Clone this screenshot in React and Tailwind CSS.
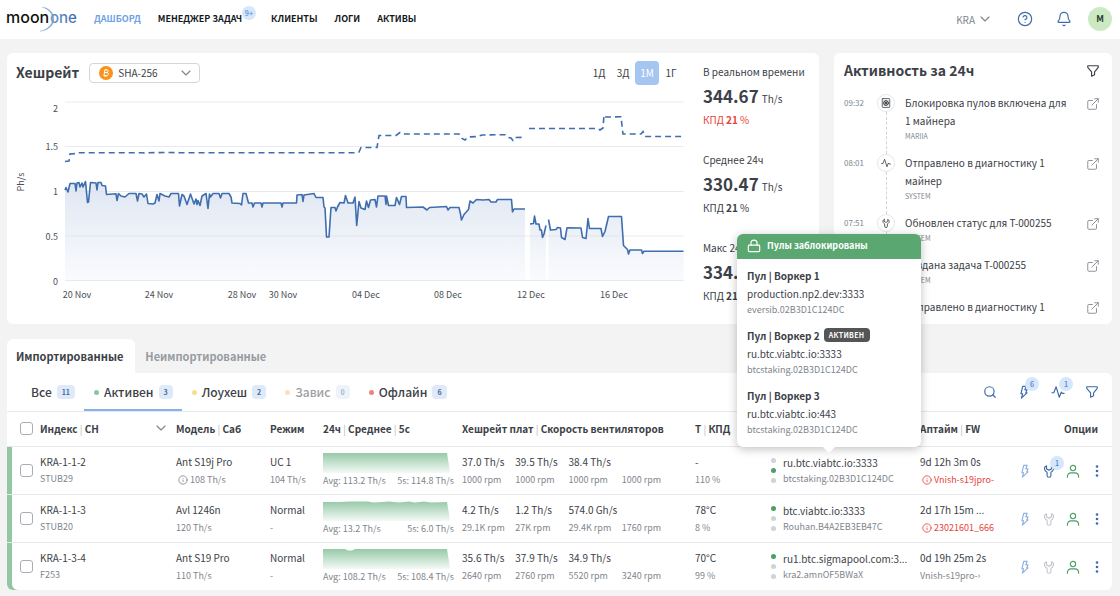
import { useState } from 'react';
import { Bell, ChevronDown, CircleHelp, ExternalLink, Info, Search } from 'lucide-react';

const MAX_LINE =
  'M65 161.5 69 161 70 154 76 153.5 78 152.7H143L145 153.4 148 152.7 170 152.5 180 152.7H356L359 152 361 147.5H377L379 135.5H396L400 132.5 402 134H459L462 138.5 465 140 468 137 478 136.5 482 135 505 134.7 508 137.5 511 138 513 140.5 515 137.5 525 137.3M529 128.5H598L600 130 603 128 604 115 606 117 621 116.8 623 134H641L643 131.5 645 136.5H683.5';

// the series has two short gaps, so every segment is drawn and filled on its own
const SEGMENTS = [
  {
    from: 65,
    d: '65 190 66 187.5 68 192 70 183.5 75 183.5 76 191 77 183 79 182.5 80 187 82 183 83 187 85.5 181.5 87.5 202.5 88.5 202 90.5 182.5 96 183 97 190 98 182.5 101 182.5 102 185.5 105.5 186 106.5 194.5 116 193.8 117 200.5 118.5 193.5 121 196 125 197 129 193.5 136 193.5 137.5 201 139 193.5 142 194 144 197 146.5 194 148 203.5 153 204 155 203 157 194.5 159 201 160 193.5 165 196 169 197 171 193.5 178.5 193.5 179.5 206 182 194.5 184 196 187 204.5 190.5 194 194 204 196 199 197 204.5 198 200.5 200 205.5 202 196 206 193.5 208 208.5 209.5 194 210.5 197 213 193.5 219 193.5 220.5 198 222 193.5 229 193.5 231 197 232 203 240 203.5 241.5 205 243 193.5 246 193.5 248.5 203 252 203 253 207 254.5 203 261 203 262 207 263 203 281 203 282 207 283 203 296.5 203 297 195 302 194.5 303 201.5 304 195 314 193.5 316 197.5 323 197.5 324 207 325 208 326.5 237 329 237 331 207.5 335 207.5 336 211 337.5 207 340 202.5 344 203 345.5 195.5 348 203 353 203 355 197 356.7 225.5 359 201.5 361 208 365 209.5 366.5 201 368.5 207.5 370.5 200 375 199.5 376.5 207 378 196 385 196 386 204.5 386.5 196 388.5 205.5 395 205.5 396.5 197.5 399.5 204.5 401.5 196.5 406 196.5 406.5 207.5 423 207 427 210 429.5 207.5 446.5 206.5 448 210 450 207.5 459 207.5 460.5 214 461.5 220 464 214.5 468.5 209.5 470 201 473 203 476.5 199.5 483 200 489 199.5 491 202 496 202 497.5 199.5 511.5 199.5 512.5 212 514 209 525 209',
  },
  {
    from: 530,
    d: '530 224 533.5 223.5 534.5 216 536 224 539 224 540 230 541.5 230 542.5 237.5 544 234 546 225.5',
  },
  {
    from: 548.5,
    d: '548.5 219.5 550.5 230 556 229.5 557.5 227.5 560.5 228 561.5 237.5 565 239.5 567 227.8 581 228 582.5 237.5 586 238.5 588 218.5 589.5 228.5 601 228.5 602.5 236.5 605 231.5 608.5 216.5 621.5 216.5 623.5 245.5 627.5 249.5 628.5 254 630 250 641.5 250 642.5 253.5 644 251.3 683.5 251.3',
  },
];

const Y_TICKS = [
  { label: '2', line: 102, y: 112 },
  { label: '1.5', line: 146.5, y: 150 },
  { label: '1', line: 191.5, y: 195 },
  { label: '0.5', line: 236, y: 240 },
  { label: '0', line: 280.5, y: 285 },
];

const X_TICKS = [
  { label: '20 Nov', x: 77 },
  { label: '24 Nov', x: 159 },
  { label: '28 Nov', x: 242 },
  { label: '30 Nov', x: 283 },
  { label: '04 Dec', x: 366 },
  { label: '08 Dec', x: 448 },
  { label: '12 Dec', x: 531 },
  { label: '16 Dec', x: 614 },
];

const STATS = [
  { title: 'В реальном времени', value: '344.67', percent: 21, alert: true },
  { title: 'Среднее 24ч', value: '330.47', percent: 21 },
  { title: 'Макс 24ч', value: '334.67', percent: 21 },
];

const EVENTS = [
  { time: '09:32', icon: 'pool', text: 'Блокировка пулов включена для 1 майнера', author: 'MARIIA' },
  { time: '08:01', icon: 'pulse', text: 'Отправлено в диагностику 1 майнер', author: 'SYSTEM' },
  { time: '07:51', icon: 'wrench', text: 'Обновлен статус для T-000255', author: 'SYSTEM' },
  { time: '', icon: 'wrench', text: 'Создана задача T-000255', author: 'SYSTEM' },
  { time: '', icon: 'pulse', text: 'Отправлено в диагностику 1', author: '' },
];

const FILTERS = [
  { id: 'all', label: 'Все', count: 11 },
  { id: 'active', label: 'Активен', count: 3, dot: 'bg-[#8cc5a0]' },
  { id: 'low', label: 'Лоухеш', count: 2, dot: 'bg-[#f7e08a]' },
  { id: 'stuck', label: 'Завис', count: 0, dot: 'bg-[#fbc27a]' },
  { id: 'offline', label: 'Офлайн', count: 6, dot: 'bg-[#f08080]' },
];

const POOLS = [
  { id: 1, url: 'production.np2.dev:3333', worker: 'eversib.02B3D1C124DC' },
  { id: 2, url: 'ru.btc.viabtc.io:3333', worker: 'btcstaking.02B3D1C124DC', active: true },
  { id: 3, url: 'ru.btc.viabtc.io:443', worker: 'btcstaking.02B3D1C124DC' },
];

const MINERS = [
  {
    name: 'KRA-1-1-2', sn: 'STUB29', model: 'Ant S19j Pro', sub: '108 Th/s', subInfo: true, mode: 'UC 1', modeSub: '104 Th/s',
    spark: 'M0 0H124L127 19V20H0Z', avg: '113.2 Th/s', last: '114.8 Th/s',
    boards: ['37.0 Th/s', '39.5 Th/s', '38.4 Th/s', ''], fans: ['1000 rpm', '1000 rpm', '1000 rpm', '1000 rpm'],
    temp: '-', eff: '110 %', pool: 'ru.btc.viabtc.io:3333', worker: 'btcstaking.02B3D1C124DC', poolIndex: 1,
    uptime: '9d 12h 3m 0s', fw: 'Vnish-s19jpro-', fwAlert: true, tasks: 1, tooltip: true,
  },
  {
    name: 'KRA-1-1-3', sn: 'STUB20', model: 'Avl 1246n', sub: '120 Th/s', mode: 'Normal', modeSub: '-',
    spark: 'M0 1H16L28 .5 45 .5 50 1.5 60 1 66 .5 76 1.5 86 .5 92 1.5 101 .5 108 1.5 124 1 127 19V20H0Z', avg: '13.2 Th/s', last: '6.0 Th/s',
    boards: ['4.2 Th/s', '1.2 Th/s', '574.0 Gh/s', ''], fans: ['29.1K rpm', '27K rpm', '29.4K rpm', '1760 rpm'],
    temp: '78°C', eff: '8 %', pool: 'btc.viabtc.io:3333', worker: 'Rouhan.B4A2EB3EB47C', poolIndex: 0,
    uptime: '2d 17h 15m ...', fw: '23021601_666', fwAlert: true,
  },
  {
    name: 'KRA-1-3-4', sn: 'F253', model: 'Ant S19 Pro', sub: '110 Th/s', mode: 'Normal', modeSub: '-',
    spark: 'M0 0H22L25 1.5 29 1.5 32 0H124L127 19V20H0Z', avg: '108.2 Th/s', last: '108.4 Th/s',
    boards: ['35.6 Th/s', '37.9 Th/s', '34.9 Th/s', ''], fans: ['2640 rpm', '2760 rpm', '5520 rpm', '3240 rpm'],
    temp: '70°C', eff: '99 %', pool: 'ru1.btc.sigmapool.com:3...', worker: 'kra2.amnOF5BWaX', poolIndex: 0,
    uptime: '0d 19h 25m 2s', fw: 'Vnish-s19pro-›',
  },
];

const Icon = ({ className, children }) => (
  <svg viewBox="0 0 16 16" className={className} fill="none" stroke="currentColor" strokeWidth="1.3" strokeLinecap="round" strokeLinejoin="round" aria-hidden="true">
    {children}
  </svg>
);

const FunnelIcon = ({ className }) => (
  <Icon className={className}>
    <path d="M2 2h12v1.8L9.8 9v3.2L6.4 14V9L2 3.8z" />
  </Icon>
);

const BoltIcon = ({ className }) => (
  <Icon className={className}>
    <path d="M6.5 1.5h4L9 5.5h2.5L10 9h1.5L5 15l1.5-5h-2z" />
  </Icon>
);

const PulseIcon = ({ className }) => (
  <Icon className={className}>
    <path d="M1 8.8h2.2L5.8 2l3.7 12 2.3-6 1 1.6H15" />
  </Icon>
);

const WrenchIcon = ({ className }) => (
  <Icon className={className}>
    <path d="M5.2 2C3.3 3 2.4 5.2 3.4 7.2c.6 1.2 1.6 1.8 2.4 2.2V13a2.2 2.2 0 0 0 4.4 0V9.4c.8-.4 1.8-1 2.4-2.2 1-2 .1-4.2-1.8-5.2v3.6L8 7 5.2 5.6z" />
  </Icon>
);

const UserIcon = ({ className }) => (
  <Icon className={className}>
    <circle cx="8" cy="4.5" r="3" />
    <path d="M1.5 15c0-3.2 2-4.8 4.3-4.8h4.4c2.3 0 4.3 1.6 4.3 4.8" />
  </Icon>
);

const LockIcon = ({ className }) => (
  <Icon className={className}>
    <rect x="1.5" y="7" width="13" height="7.5" rx="1" />
    <path d="M4.5 7V4.8a3.5 3.5 0 0 1 7 0V7" />
  </Icon>
);

const PoolIcon = ({ className }) => (
  <Icon className={className}>
    <rect x="2" y="1" width="12" height="14" rx="1" />
    <circle cx="8" cy="8" r="4" />
    <path d="m5 5 6 6M11 5l-6 6M8 4v8M4 8h8" />
  </Icon>
);

const EVENT_ICONS = { pool: PoolIcon, pulse: PulseIcon, wrench: WrenchIcon };

const Badge = ({ children }) => (
  <span className="absolute -top-2 left-2 w-3.5 h-3.5 rounded-full bg-[#d6e6fb] text-[7px] leading-[14px] text-center font-medium text-[#4f84c4]">
    {children}
  </span>
);

const Divider = () => <span className="font-normal text-[#b5b9be]"> | </span>;

const Logo = () => (
  <a href="#" aria-label="moonone" className="block">
    <svg viewBox="0 0 70 28" className="w-[70px] h-7 overflow-visible font-['Inter',sans-serif] font-medium">
      <defs>
        <linearGradient id="one" x1="0" x2="1">
          <stop offset="0" stopColor="#6f9bd0" />
          <stop offset="1" stopColor="#3d6ba8" />
        </linearGradient>
      </defs>
      <path d="M36 2C43 2.5 48 8 48 14S42 26 34 26.2C41 24.5 46.5 20 46.5 14S42 4 36 2z" fill="#7fa9d8" stroke="#7fa9d8" strokeWidth=".3" />
      <text x="0" y="18" fontSize="16" fill="#111">moon</text>
      <text x="44" y="18" fontSize="15" fill="url(#one)">one</text>
    </svg>
  </a>
);

const Header = () => (
  <header className="flex items-center h-[39px] pl-1.5 pr-2 pb-px bg-white text-[9px] font-bold text-[#15181c]">
    <Logo />
    <nav className="flex items-center gap-[17px] ml-[18px]">
      <a href="#" className="text-[#6ea3e3]">ДАШБОРД</a>
      <a href="#" className="relative mr-3">
        МЕНЕДЖЕР ЗАДАЧ
        <span className="absolute left-full -top-1.5 w-3.5 h-3.5 rounded-full bg-[#d6e6fb] text-[7px] leading-[14px] text-center text-[#6ea3e3]">9+</span>
      </a>
      <a href="#">КЛИЕНТЫ</a>
      <a href="#">ЛОГИ</a>
      <a href="#">АКТИВЫ</a>
    </nav>
    <button className="flex items-center gap-0.5 ml-auto text-[10px] font-normal text-[#80868e]">
      KRA
      <ChevronDown className="w-4 h-4" strokeWidth={1.75} />
    </button>
    <button aria-label="Помощь" className="ml-6 text-[#3d6ba8]">
      <CircleHelp className="w-4 h-4" strokeWidth={1.75} />
    </button>
    <button aria-label="Уведомления" className="ml-[23px] text-[#3d6ba8]">
      <Bell className="w-4 h-4" strokeWidth={1.75} />
    </button>
    <button className="ml-4 w-6 h-6 rounded-full bg-[#cbe9c3] text-[9px] text-[#2b3a2b]">M</button>
  </header>
);

const HashrateChart = () => (
  <svg viewBox="16 85 672 225" className="w-full overflow-visible" role="img" aria-label="Хешрейт">
    <defs>
      <linearGradient id="area" x1="0" x2="0" y1="180" y2="281" gradientUnits="userSpaceOnUse">
        <stop offset="0" stopColor="#dfe6f2" />
        <stop offset="1" stopColor="#fafbfd" />
      </linearGradient>
    </defs>
    {SEGMENTS.map((s) => (
      <path key={s.from} d={`M${s.d}V280.5H${s.from}Z`} fill="url(#area)" />
    ))}
    {Y_TICKS.map((t) => (
      <g key={t.label}>
        <path d={`M65 ${t.line}H683.5`} stroke="#dde2e8" strokeOpacity=".7" />
        <text x="58" y={t.y} textAnchor="end" fontSize="9" fill="#4c5157">{t.label}</text>
      </g>
    ))}
    {X_TICKS.map((t) => (
      <text key={t.label} x={t.x} y="298" textAnchor="middle" fontSize="9" fill="#4c5157">{t.label}</text>
    ))}
    <text transform="translate(24 182) rotate(-90)" textAnchor="middle" fontSize="9" fill="#4c5157">Ph/s</text>
    <path d={MAX_LINE} fill="none" stroke="#3f6eae" strokeWidth="1.6" strokeDasharray="6 4" />
    {SEGMENTS.map((s) => (
      <path key={s.from} d={`M${s.d}`} fill="none" stroke="#3f6eae" strokeWidth="1.6" strokeLinejoin="round" />
    ))}
  </svg>
);

const HashrateCard = () => {
  const [period, setPeriod] = useState('1М');

  return (
    <section className="flex flex-1 gap-[15px] pl-[9px] pr-2 pt-2 pb-3.5 bg-white rounded-md">
      <div className="flex-1 min-w-0">
        <div className="flex items-center h-6">
          <h2 className="text-[14px] leading-5 pb-0.5 font-bold">Хешрейт</h2>
          <div className="relative ml-2.5">
            <select aria-label="Алгоритм" className="block appearance-none w-[111px] h-5 pl-7 rounded border border-[#d3d6da] bg-white text-[10px] leading-4">
              <option>SHA-256</option>
            </select>
            <svg viewBox="0 0 14 14" className="absolute left-2.5 top-[3px] w-3.5 h-3.5 pointer-events-none">
              <circle cx="7" cy="7" r="7" fill="#f7931a" />
              <path d="M5.5 4h2.3c1.7 0 1.7 2.6 0 2.6H5.2h2.8c2 0 1.8 3-.2 3H4.7M5.9 4 4.9 9.6M6.6 3v1M7.9 3v1M5.9 9.7v1.1M7.2 9.7v1.1" fill="none" stroke="#fff" />
            </svg>
            <ChevronDown className="absolute right-1.5 top-0.5 w-4 h-4 text-[#80868e] pointer-events-none" strokeWidth={1.75} />
          </div>
          <div className="flex ml-auto pr-[5px]">
            {['1Д', '3Д', '1М', '1Г'].map((p) => (
              <button
                key={p}
                onClick={() => setPeriod(p)}
                className={`w-6 h-6 pb-0.5 rounded text-[10px] ${p === period ? 'bg-[#a5c6f0] text-white' : ''}`}
              >
                {p}
              </button>
            ))}
          </div>
        </div>
        <HashrateChart />
      </div>

      <div className="flex flex-col gap-[22px] w-[108px] pt-0.5 text-[10px]">
        {STATS.map((s) => (
          <div key={s.title}>
            <div className="h-[18px] leading-[18px] whitespace-nowrap">{s.title}</div>
            <div className="flex items-baseline gap-[3px] h-[30px] leading-[30px]">
              <b className="text-[17px]">{s.value}</b>
              <span>Th/s</span>
            </div>
            <div className={`h-[18px] leading-[18px] ${s.alert ? 'text-[#e8443a]' : ''}`}>
              КПД <b>{s.percent}</b> %
            </div>
          </div>
        ))}
      </div>
    </section>
  );
};

const ActivityCard = () => (
  <section className="w-[278px] h-[271px] overflow-hidden pl-2.5 pr-3 pt-2 bg-white rounded-md">
    <div className="flex items-center justify-between h-5">
      <h2 className="text-[14px] leading-5 pb-0.5 font-bold">Активность за 24ч</h2>
      <button aria-label="Фильтр"><FunnelIcon className="block w-3.5 h-3.5" /></button>
    </div>
    <ul className="mt-[13px]">
      {EVENTS.map((e, i) => {
        const EventIcon = EVENT_ICONS[e.icon];
        return (
          <li key={i} className="flex">
            <time className="w-[33px] text-[8px] leading-[18px] text-[#80868e]">{e.time}</time>
            <div className="flex flex-col items-center w-[18px] mr-2.5">
              <span className="flex shrink-0 items-center justify-center w-[18px] h-[18px] rounded-full border border-[#e4e6e9]">
                <EventIcon className="w-2.5 h-2.5" />
              </span>
              <span className="flex-1 border-l border-dashed border-[#cfd3d8]" />
            </div>
            <div className="flex-1 pr-4 pb-3">
              <p className="text-[10px] leading-[18px]">{e.text}</p>
              <p className="h-3 text-[7px] leading-3 text-[#80868e]">{e.author}</p>
            </div>
            <a href="#" aria-label="Открыть" className="pt-[3px] text-[#80868e]">
              <ExternalLink className="w-3.5 h-3.5" strokeWidth={1.5} />
            </a>
          </li>
        );
      })}
    </ul>
  </section>
);

const PoolTooltip = () => (
  <div role="tooltip" className="absolute z-10 bottom-full -left-[34px] w-[184px] rounded-md bg-white shadow-[0_2px_10px_rgba(0,0,0,0.25)]">
    <div className="flex items-center gap-1.5 h-[25px] pl-2.5 pb-px rounded-t-md bg-[#5aa772] text-[9px] font-bold text-white">
      <LockIcon className="w-3.5 h-3.5" />
      Пулы заблокированы
    </div>
    <div className="flex flex-col gap-2.5 px-2.5 pt-2 pb-2.5">
      {POOLS.map((p) => (
        <div key={p.id}>
          <div className="flex items-center gap-1 h-[18px] pb-0.5 text-[10px] font-bold">
            Пул | Воркер {p.id}
            {p.active && (
              <span className="h-3.5 px-[5px] rounded bg-[#555] text-[7px] leading-[14px] tracking-wider text-white">АКТИВЕН</span>
            )}
          </div>
          <div className="text-[10px] leading-[18px]">{p.url}</div>
          <div className="text-[9px] leading-[14px] text-[#80868e]">{p.worker}</div>
        </div>
      ))}
    </div>
    <span className="absolute left-[87px] -bottom-1 w-2.5 h-2.5 rotate-45 bg-white" />
  </div>
);

const MinerRow = ({ miner }) => (
  <tr className="group h-12 align-top [&>td]:border-t [&>td]:border-[#e6e8eb]">
    <td className="pl-[13px] align-middle shadow-[inset_5px_0_#93c6a5] group-last:rounded-bl-md">
      <input type="checkbox" aria-label={miner.name} className="block appearance-none w-[13px] h-[13px] rounded-[3px] border border-[#a9aeb4]" />
    </td>
    <td className="pt-1.5">
      <div className="leading-[18px]">{miner.name}</div>
      <div className="text-[9px] leading-4 text-[#80868e]">{miner.sn}</div>
    </td>
    <td className="pt-1.5">
      <div className="leading-[18px]">{miner.model}</div>
      <div className="flex items-center gap-0.5 text-[9px] leading-[18px] text-[#80868e]">
        {miner.subInfo && <Info className="w-2.5 h-2.5 ml-0.5" />}
        {miner.sub}
      </div>
    </td>
    <td className="pt-1.5">
      <div className="leading-[18px]">{miner.mode}</div>
      <div className="text-[9px] leading-[18px] text-[#80868e] whitespace-nowrap">{miner.modeSub}</div>
    </td>
    <td className="pt-1.5 pr-2">
      <svg viewBox="0 0 131 20" className="block w-full h-5" preserveAspectRatio="none">
        <path d={miner.spark} fill="url(#spark)" />
      </svg>
      <div className="flex justify-between text-[9px] leading-4 text-[#80868e] whitespace-nowrap">
        <span>Avg: {miner.avg}</span>
        <span>5s: {miner.last}</span>
      </div>
    </td>
    <td className="pt-1.5 pr-5">
      <div className="grid grid-cols-4 whitespace-nowrap">
        {miner.boards.map((b, i) => <span key={i} className="leading-[18px]">{b}</span>)}
        {miner.fans.map((f, i) => <span key={i} className="text-[9px] leading-[18px] text-[#80868e]">{f}</span>)}
      </div>
    </td>
    <td className="pt-1.5">
      <div className="leading-[18px]">{miner.temp}</div>
      <div className="text-[9px] leading-[18px] text-[#80868e]">{miner.eff}</div>
    </td>
    <td className="relative pt-2">
      {miner.tooltip && <PoolTooltip />}
      <div className="flex gap-[7px]">
        <div className="flex flex-col gap-[5px] pt-[3px]">
          {[0, 1, 2].map((i) => (
            <span key={i} className={`w-[5px] h-[5px] rounded-full ${i === miner.poolIndex ? 'bg-[#4f9e68]' : 'bg-[#d0d3d6]'}`} />
          ))}
        </div>
        <div className="whitespace-nowrap">
          <div className="leading-4">{miner.pool}</div>
          <div className="text-[9px] leading-4 text-[#80868e]">{miner.worker}</div>
        </div>
      </div>
    </td>
    <td className="pt-1.5">
      <div className="leading-[18px] whitespace-nowrap">{miner.uptime}</div>
      <div className={`flex items-center gap-0.5 text-[9px] leading-[18px] whitespace-nowrap ${miner.fwAlert ? 'text-[#e8443a]' : 'text-[#80868e]'}`}>
        {miner.fwAlert && <Info className="w-2.5 h-2.5 ml-0.5" />}
        {miner.fw}
      </div>
    </td>
    <td className="align-middle">
      <div className="flex justify-end pr-[3px]">
        <button aria-label="Питание" className="flex justify-center w-6 text-[#8fb0dc]"><BoltIcon className="w-3.5 h-3.5" /></button>
        <button aria-label="Ремонт" className={`flex justify-center w-6 ${miner.tasks ? 'text-[#3d6ba8]' : 'text-[#c3c7cc]'}`}>
          <span className="relative">
            <WrenchIcon className="block w-3.5 h-3.5" />
            {miner.tasks && <Badge>{miner.tasks}</Badge>}
          </span>
        </button>
        <button aria-label="Клиент" className="flex justify-center w-6 text-[#4f9e68]"><UserIcon className="w-3.5 h-3.5" /></button>
        <button aria-label="Ещё" className="flex justify-center w-6 text-[#3d6ba8]">
          <svg viewBox="0 0 14 14" className="w-3.5 h-3.5" fill="currentColor">
            <circle cx="7" cy="2.5" r="1.3" />
            <circle cx="7" cy="7" r="1.3" />
            <circle cx="7" cy="11.5" r="1.3" />
          </svg>
        </button>
      </div>
    </td>
  </tr>
);

const Miners = () => {
  const [filter, setFilter] = useState('active');

  return (
    <section className="mt-[15px]">
      <div className="flex h-[34px] text-[11px] font-bold">
        <button className="pl-[9px] pr-3 rounded-t-md bg-white">Импортированные</button>
        <button className="px-2.5 text-[#969ba1]">Неимпортированные</button>
      </div>

      <div className="bg-white rounded-b-md rounded-tr-md">
        <div className="flex items-center h-[38px] pl-3.5 pr-[13px]">
          {FILTERS.map((f) => (
            <button
              key={f.id}
              onClick={() => setFilter(f.id)}
              className={`flex items-center gap-[5px] h-full pl-2.5 pr-[9px] border-y-2 border-t-transparent text-[12px] font-medium ${
                f.id === filter ? 'border-b-[#85b1ec]' : 'border-b-transparent'
              } ${f.count === 0 ? 'opacity-50' : ''}`}
            >
              {f.dot && <span className={`w-[5px] h-[5px] rounded-full ${f.dot}`} />}
              {f.label}
              <span className="px-[5px] rounded-sm bg-[#dfe9f7] text-[7px] leading-[14px] font-bold text-[#3d6ba8]">{f.count}</span>
            </button>
          ))}
          <div className="flex items-center gap-5 ml-auto text-[#3d6ba8]">
            <button aria-label="Поиск"><Search className="block w-3.5 h-3.5" /></button>
            <button aria-label="Питание" className="relative"><BoltIcon className="block w-3.5 h-3.5" /><Badge>6</Badge></button>
            <button aria-label="Диагностика" className="relative"><PulseIcon className="block w-3.5 h-3.5" /><Badge>1</Badge></button>
            <button aria-label="Фильтр"><FunnelIcon className="block w-3.5 h-3.5" /></button>
          </div>
        </div>

        <table className="w-full table-fixed border-separate border-spacing-0 text-[10px] text-left">
          <colgroup>
            <col className="w-[33px]" />
            <col />
            <col className="w-[94px]" />
            <col className="w-[53px]" />
            <col className="w-[139px]" />
            <col className="w-[233px]" />
            <col className="w-[76px]" />
            <col className="w-[149px]" />
            <col className="w-[92px]" />
            <col className="w-[100px]" />
          </colgroup>
          <thead>
            <tr className="h-[35px] whitespace-nowrap [&>th]:pb-0.5 [&>th]:border-t [&>th]:border-[#e6e8eb]">
              <th className="pl-[13px]">
                <input type="checkbox" aria-label="Выбрать все" className="block appearance-none w-[13px] h-[13px] rounded-[3px] border border-[#a9aeb4]" />
              </th>
              <th>
                <div className="flex items-center justify-between pr-[7px]">
                  <span>Индекс<Divider />СН</span>
                  <ChevronDown className="w-4 h-4 text-[#80868e]" strokeWidth={1.75} />
                </div>
              </th>
              <th>Модель<Divider />Саб</th>
              <th>Режим</th>
              <th>24ч<Divider />Среднее<Divider />5с</th>
              <th>Хешрейт плат<Divider />Скорость вентиляторов</th>
              <th>T<Divider />КПД</th>
              <th />
              <th>Аптайм<Divider />FW</th>
              <th className="pr-3.5 text-right">Опции</th>
            </tr>
          </thead>
          <tbody>
            {MINERS.map((m) => <MinerRow key={m.name} miner={m} />)}
          </tbody>
        </table>
      </div>
    </section>
  );
};

const App = () => (
  <div className="min-h-screen bg-[#f3f3f3] font-['Noto_Sans_CJK_KR','Noto_Sans',sans-serif] text-[#3c4147]">
    <svg className="absolute w-0 h-0" aria-hidden="true">
      <linearGradient id="spark" x1="0" x2="0" y1="0" y2="1">
        <stop offset="0" stopColor="#97c9a8" />
        <stop offset="1" stopColor="#f4faf6" />
      </linearGradient>
    </svg>
    <Header />
    <main className="pl-[7px] pr-2 pt-3.5 pb-1.5">
      <div className="flex gap-[15px]">
        <HashrateCard />
        <ActivityCard />
      </div>
      <Miners />
    </main>
  </div>
);

export default App;
